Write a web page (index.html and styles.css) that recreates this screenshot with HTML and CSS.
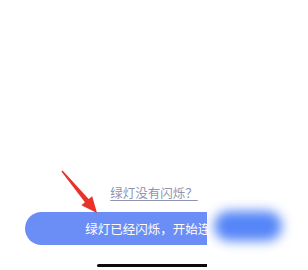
FILE: index.html
```html
<!DOCTYPE html>
<html lang="zh">
<head>
<meta charset="utf-8">
<link rel="stylesheet" href="styles.css">
</head>
<body>
<div class="screen">
  <a class="help-link">绿灯没有闪烁？</a>
  <div class="primary-btn">绿灯已经闪烁，开始连接</div>
  <div class="home-bar"></div>
  <svg class="arrow" width="308" height="270" viewBox="0 0 308 270">
    <polygon points="61.4,171.6 62.6,170.4 88.7,199.1 92.2,196.2 97,213 81.4,205.2 84.9,202.3" fill="#e8332b"/>
  </svg>
  <div class="mask"><div class="mask-blob"></div></div>
</div>
</body>
</html>
```
FILE: styles.css
```css
html, body {
  margin: 0;
  padding: 0;
  background: #ffffff;
}
.screen {
  position: relative;
  width: 308px;
  height: 270px;
  overflow: hidden;
  display: flex;
  flex-direction: column;
  align-items: center;
  justify-content: flex-end;
  font-family: "Noto Sans CJK SC", "Noto Sans", sans-serif;
}
.help-link {
  font-size: 12.5px;
  line-height: 16px;
  color: #8e93b2;
  text-decoration: underline;
  text-underline-offset: 2px;
  text-decoration-thickness: 1px;
  margin-bottom: 11px;
}
.primary-btn {
  width: 258px;
  height: 33px;
  border-radius: 17px;
  background: #6a8ef5;
  color: #ffffff;
  font-size: 12.5px;
  display: flex;
  align-items: center;
  justify-content: center;
}
.home-bar {
  width: 114px;
  height: 3px;
  border-radius: 2px;
  background: #0a0a0a;
  margin-top: 19px;
  margin-bottom: 3px;
}
.arrow {
  position: absolute;
  left: 0;
  top: 0;
}
.mask {
  position: absolute;
  left: 207px;
  top: 199px;
  right: 0;
  bottom: 0;
  background: #ffffff;
  overflow: hidden;
}
.mask-blob {
  position: absolute;
  left: 7px;
  top: 12px;
  width: 68px;
  height: 30px;
  border-radius: 15px;
  background: #5585f7;
  filter: blur(6px);
}
```
